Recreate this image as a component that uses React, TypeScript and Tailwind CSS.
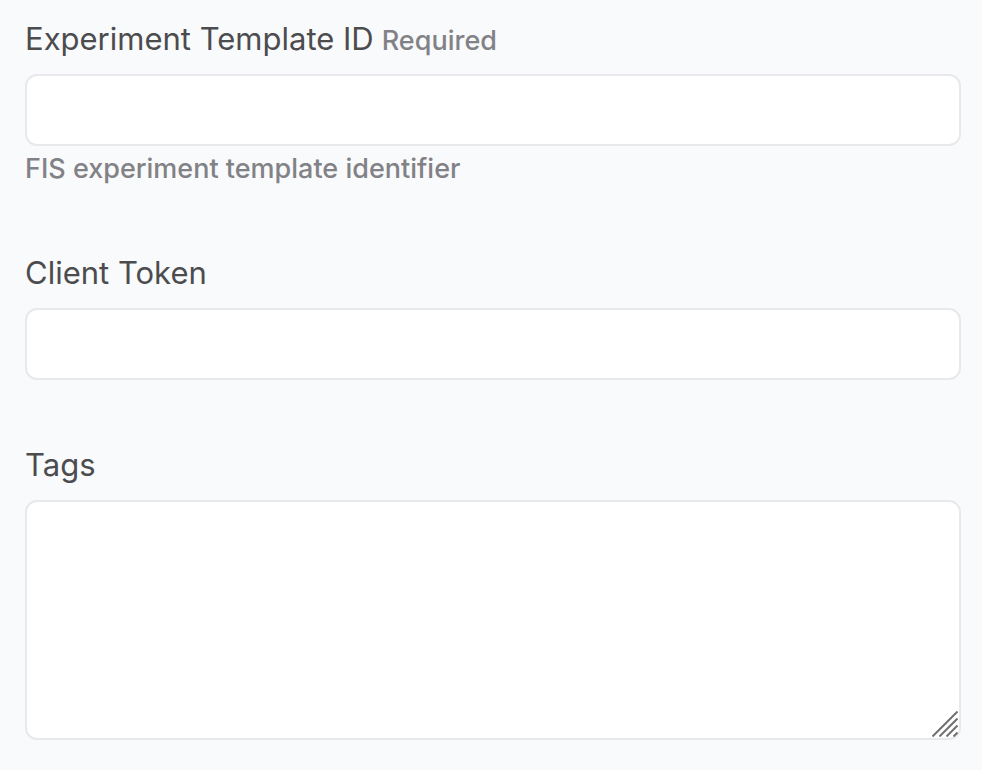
import React from "react";

const control =
  "block w-full rounded-xl border-2 border-[#e8e8ed] bg-white px-4 text-[27px] text-[#545457] outline-none";

type FieldProps = {
  id: string;
  label: string;
  required?: boolean;
  hint?: string;
  children: React.ReactNode;
};

function Field({ id, label, required, hint, children }: FieldProps) {
  return (
    <div>
      <div className="mb-3 flex h-[46px] items-baseline gap-2 leading-[46px]">
        <label htmlFor={id} className="text-[31px] text-[#4c4c4f]">
          {label}
        </label>
        {required && <span className="text-[27px] font-medium text-[#828286]">Required</span>}
      </div>
      {children}
      {hint && (
        <p id={`${id}-hint`} className="mt-1 text-[27px] leading-[38px] font-medium text-[#828286]">
          {hint}
        </p>
      )}
    </div>
  );
}

export default function App() {
  return (
    <form className="flex min-h-screen flex-col gap-[62px] bg-[#f9fafc] pt-4 pr-[21px] pb-[30px] pl-[25px] font-['Inter',sans-serif]">
      <Field id="template" label="Experiment Template ID" required hint="FIS experiment template identifier">
        <input id="template" type="text" required aria-describedby="template-hint" className={`${control} h-[72px] shadow-none`} />
      </Field>
      <Field id="token" label="Client Token">
        <input id="token" type="text" className={`${control} h-[72px]`} />
      </Field>
      <Field id="tags" label="Tags">
        <div className="relative">
          <textarea id="tags" className={`${control} h-60 resize-none py-3`} />
          <svg className="pointer-events-none absolute right-[3px] bottom-[3px]" width="26" height="26" viewBox="0 0 26 26" fill="none" stroke="#707070" strokeWidth="2">
            <path d="M0.5 25.5L25.5 0.5M7.5 25.5L25.5 7.5M14.5 25.5L25.5 14.5M21.5 25.5L25.5 21.5" />
          </svg>
        </div>
      </Field>
    </form>
  );
}
